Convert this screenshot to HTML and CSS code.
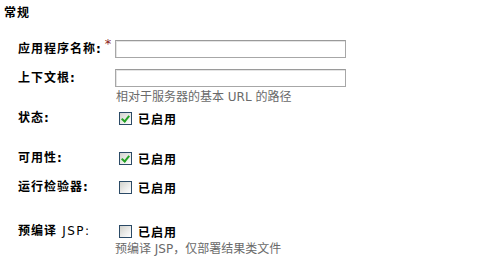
FILE: index.html
```html
<!DOCTYPE html>
<html lang="zh-CN">

<head>
    <meta charset="UTF-8">
    <title>常规</title>
    <link rel="stylesheet" href="styles.css">
</head>

<body>
    <div class="section">
        <h3 class="section-title">常规</h3>

        <div class="form">
            <div class="field">
                <label class="field-label">应用程序名称:<span class="required">*</span></label>
                <div class="control">
                    <input class="text-input" type="text">
                </div>
            </div>

            <div class="field field-near">
                <label class="field-label">上下文根:</label>
                <div class="control">
                    <input class="text-input" type="text">
                    <div class="help">相对于服务器的基本 URL 的路径</div>
                </div>
            </div>

            <div class="field field-tight">
                <label class="field-label">状态:</label>
                <div class="control">
                    <span class="check-item"><span class="check checked"></span>已启用</span>
                </div>
            </div>

            <div class="field field-far">
                <label class="field-label">可用性:</label>
                <div class="control">
                    <span class="check-item"><span class="check checked"></span>已启用</span>
                </div>
            </div>

            <div class="field field-near">
                <label class="field-label">运行检验器:</label>
                <div class="control">
                    <span class="check-item"><span class="check"></span>已启用</span>
                </div>
            </div>

            <div class="field field-farther">
                <label class="field-label">预编译 <span class="latin">JSP:</span></label>
                <div class="control">
                    <span class="check-item"><span class="check"></span>已启用</span>
                    <div class="help help-tight">预编译 JSP，仅部署结果类文件</div>
                </div>
            </div>
        </div>
    </div>
</body>

</html>
```

FILE: styles.css
```css
body {
    margin: 0;
    padding: 0;
    background: white;
    color: black;
    font-family: "DejaVu Sans", "Noto Sans CJK SC", sans-serif;
    font-size: 12px;
}

.section {
    padding: 6px 0 0 4px;
}

.section-title {
    margin: 0;
    font-size: 12px;
    line-height: 14px;
    font-weight: bold;
    letter-spacing: 1px;
}

.form {
    padding: 20px 0 0 14px;
}

.field {
    display: flex;
    align-items: flex-start;
}

.field-near {
    margin-top: 11px;
}

.field-tight {
    margin-top: 5px;
}

.field-far {
    margin-top: 22px;
}

.field-farther {
    margin-top: 26px;
}

.field-label {
    width: 97px;
    flex-shrink: 0;
    font-weight: bold;
    line-height: 18px;
    letter-spacing: 1px;
    white-space: nowrap;
}

.latin {
    font-weight: normal;
    letter-spacing: 1.5px;
}

.required {
    position: relative;
    top: -5px;
    margin-left: 3px;
    color: #8b1a1a;
    font-size: 13px;
    font-weight: normal;
}

.control {
    display: flex;
    flex-direction: column;
    align-items: flex-start;
}

.text-input {
    box-sizing: border-box;
    width: 231px;
    height: 18px;
    margin: 0;
    padding: 0 3px;
    border: 1px solid #a7a7a7;
    border-top-color: #9a9a9a;
    box-shadow: inset 1px 1px 0 #e4e4e4;
    background: white;
    font: inherit;
}

.help {
    margin-top: 3px;
    padding-left: 1px;
    color: #6a6a6a;
    line-height: 14px;
}

.help-tight {
    margin-top: 2px;
    padding-left: 0;
}

.check-item {
    display: flex;
    align-items: center;
    height: 18px;
    padding-left: 4px;
    font-weight: bold;
    letter-spacing: 1px;
}

.check {
    position: relative;
    box-sizing: border-box;
    width: 13px;
    height: 13px;
    margin-right: 6px;
    border: 1px solid #2b4a66;
    background: linear-gradient(135deg, #d2d2cc 0%, #ececea 55%, #ffffff 100%);
}

.checked::after {
    content: "";
    position: absolute;
    left: 3px;
    top: 1px;
    width: 3px;
    height: 6px;
    border: solid #24a324;
    border-width: 0 2px 2px 0;
    transform: rotate(40deg);
}
```
